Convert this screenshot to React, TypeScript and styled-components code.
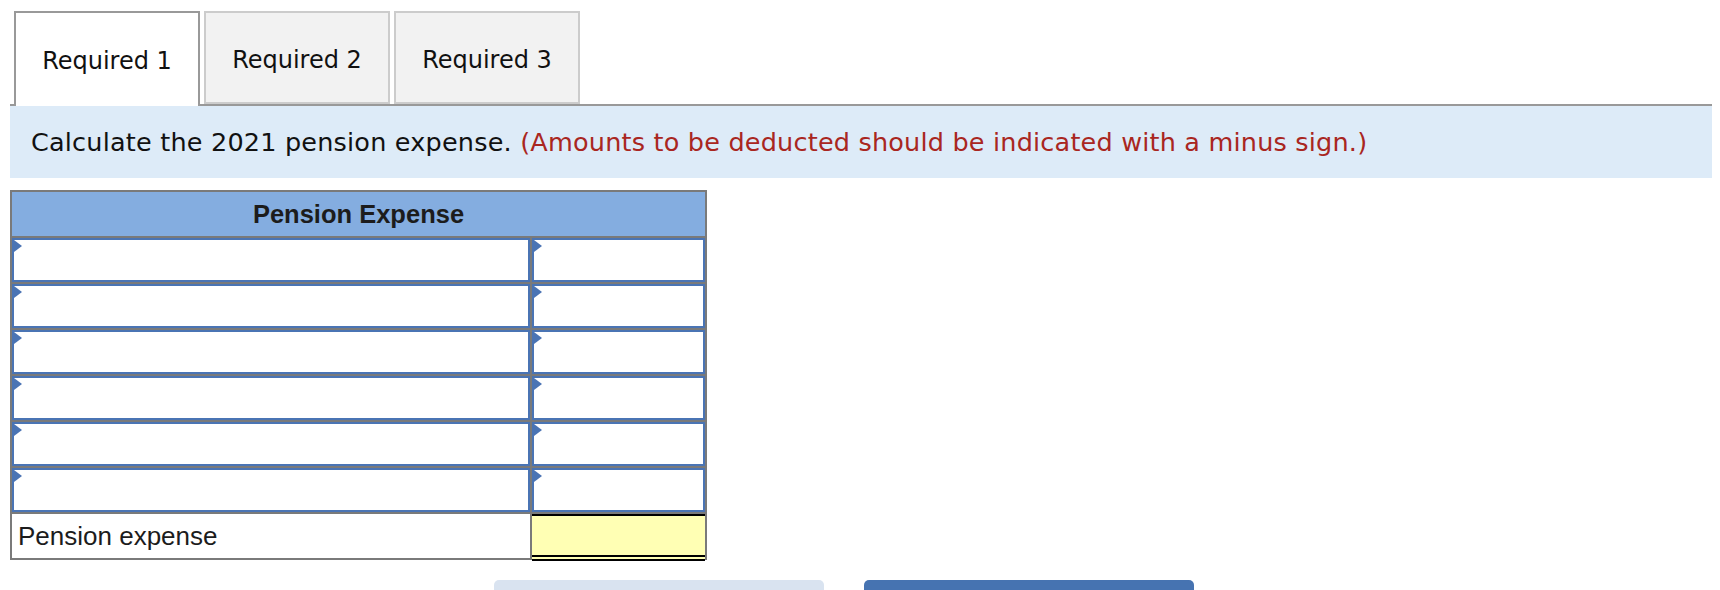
import styled, { createGlobalStyle } from "styled-components";

const GlobalStyle = createGlobalStyle`
  html, body {
    margin: 0;
    padding: 0;
    background: #ffffff;
  }
  body {
    font-family: "DejaVu Sans", Verdana, sans-serif;
    color: #111;
  }
`;

const Page = styled.div`
  padding: 11px 0 0 10px;
  width: 1702px;
`;

const TabStrip = styled.div`
  display: flex;
  align-items: flex-start;
  gap: 4px;
  padding-left: 4px;
  border-bottom: 2px solid #999999;
  height: 93px;
`;

const Tab = styled.div<{ $active?: boolean }>`
  box-sizing: border-box;
  flex: none;
  width: 186px;
  height: ${(p) => (p.$active ? "95px" : "93px")};
  padding-top: 4px;
  display: flex;
  align-items: center;
  justify-content: center;
  font-size: 24px;
  color: #111;
  background: ${(p) => (p.$active ? "#ffffff" : "#f2f2f2")};
  border: 2px solid ${(p) => (p.$active ? "#999999" : "#cccccc")};
  border-bottom: ${(p) => (p.$active ? "none" : "2px solid #cccccc")};
  padding-bottom: ${(p) => (p.$active ? "2px" : "0")};
  position: relative;
  z-index: 1;
`;

const Banner = styled.div`
  background: #ddebf8;
  height: 72px;
  display: flex;
  align-items: center;
  padding-left: 21px;
  font-size: 25.5px;
  letter-spacing: 0.2px;
  color: #111;
  white-space: pre;
`;

const Note = styled.span`
  color: #a92621;
`;

const Sheet = styled.div`
  box-sizing: border-box;
  width: 697px;
  margin-top: 12px;
  border: 2px solid #7a7a7a;
  font-family: "Liberation Sans", Arial, sans-serif;
`;

const SheetHeader = styled.div`
  height: 44px;
  background: #84ade0;
  border-bottom: 2px solid #7a7a7a;
  display: flex;
  align-items: center;
  justify-content: center;
  font-weight: bold;
  font-size: 25.5px;
  color: #1c1c1c;
`;

const Row = styled.div<{ $last?: boolean }>`
  display: flex;
  border-bottom: ${(p) => (p.$last ? "none" : "2px solid #7a7a7a")};
`;

const Cell = styled.div<{ $wide?: boolean }>`
  position: relative;
  width: ${(p) => (p.$wide ? "518px" : "173px")};
  border-right: ${(p) => (p.$wide ? "2px solid #7a7a7a" : "none")};
`;

const Field = styled.input`
  display: block;
  box-sizing: border-box;
  width: 100%;
  height: 44px;
  margin: 0;
  border: 2px solid #4a74b4;
  background: #ffffff;
  outline: none;
`;

const Marker = styled.span`
  position: absolute;
  left: 2px;
  top: 2px;
  width: 0;
  height: 0;
  border-top: 6px solid transparent;
  border-bottom: 6px solid transparent;
  border-left: 8px solid #4a74b4;
`;

const TotalLabel = styled.div`
  box-sizing: border-box;
  width: 520px;
  height: 44px;
  border-right: 2px solid #7a7a7a;
  display: flex;
  align-items: center;
  padding-left: 6px;
  font-size: 26px;
  color: #1c1c1c;
`;

const TotalValue = styled.div`
  box-sizing: border-box;
  width: 173px;
  height: 47px;
  margin-bottom: -3px;
  background: #ffffb4;
  border-top: 2px solid #000;
  border-bottom: 6px double #000;
  position: relative;
  z-index: 1;
`;

const Actions = styled.div`
  display: flex;
  gap: 40px;
  margin: 20px 0 0 484px;
`;

const NavButton = styled.button<{ $primary?: boolean }>`
  width: 330px;
  height: 44px;
  border: none;
  border-radius: 5px;
  background: ${(p) => (p.$primary ? "#4673b1" : "#d9e3f0")};
`;

const rows = [0, 1, 2, 3, 4, 5];

export default function App() {
  return (
    <>
      <GlobalStyle />
      <Page>
        <TabStrip>
          <Tab $active>Required 1</Tab>
          <Tab>Required 2</Tab>
          <Tab>Required 3</Tab>
        </TabStrip>
        <Banner>
          Calculate the 2021 pension expense.{" "}
          <Note>(Amounts to be deducted should be indicated with a minus sign.)</Note>
        </Banner>
        <Sheet>
          <SheetHeader>Pension Expense</SheetHeader>
          {rows.map((r) => (
            <Row key={r}>
              <Cell $wide>
                <Field />
                <Marker />
              </Cell>
              <Cell>
                <Field />
                <Marker />
              </Cell>
            </Row>
          ))}
          <Row $last>
            <TotalLabel>Pension expense</TotalLabel>
            <TotalValue />
          </Row>
        </Sheet>
        <Actions>
          <NavButton aria-label="Previous" />
          <NavButton $primary aria-label="Next" />
        </Actions>
      </Page>
    </>
  );
}
